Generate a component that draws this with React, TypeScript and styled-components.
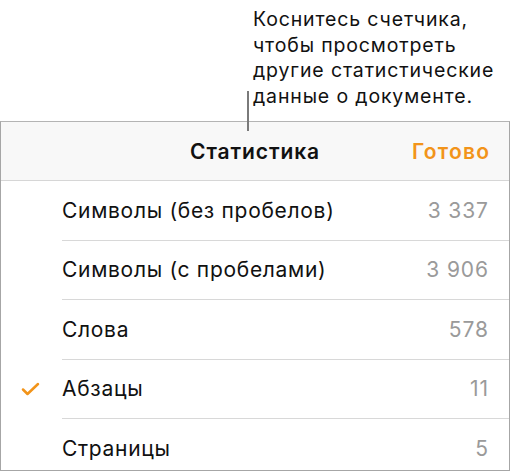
import React from 'react'
import styled, { createGlobalStyle } from 'styled-components'

const GlobalStyle = createGlobalStyle`
  html, body {
    margin: 0;
    padding: 0;
    background: #fff;
  }
  body {
    font-family: Inter, Roboto, "Liberation Sans", sans-serif;
    color: #111;
  }
`

const Page = styled.div`
  position: relative;
  width: 512px;
  height: 474px;
  overflow: hidden;
`

const Callout = styled.div`
  padding: 7px 0 0 253px;
  height: 121px;
  box-sizing: border-box;
  font-size: 19.5px;
  line-height: 25.5px;
  letter-spacing: 0.85px;
  color: #111;
`

const Leader = styled.div`
  position: absolute;
  left: 247px;
  top: 91px;
  width: 1.5px;
  height: 40px;
  background: #7a7a7a;
  z-index: 2;
`

const Panel = styled.div`
  width: 510px;
  height: 350px;
  box-sizing: border-box;
  border: 1px solid #a6a6a6;
  border-top-color: #b4b4b4;
  background: #fff;
  display: flex;
  flex-direction: column;
  overflow: hidden;
`

const Header = styled.div`
  position: relative;
  flex-shrink: 0;
  height: 58px;
  background: #f8f8f8;
  border-bottom: 1px solid #d6d6d6;
  display: flex;
  align-items: center;
  justify-content: center;
`

const Title = styled.div`
  font-size: 21px;
  font-weight: 600;
  letter-spacing: 0.9px;
  color: #111;
`

const Done = styled.div`
  position: absolute;
  right: 20px;
  top: 50%;
  transform: translateY(-50%);
  font-size: 21px;
  font-weight: 600;
  letter-spacing: 1.2px;
  margin-right: -1.2px;
  color: #f2941a;
`

const List = styled.div`
  display: flex;
  flex-direction: column;
  flex-shrink: 0;
`

const Row = styled.div`
  display: flex;
  align-items: stretch;
  flex-shrink: 0;
  height: 59.5px;
`

const Mark = styled.div`
  width: 61px;
  display: flex;
  align-items: center;
  justify-content: center;
  padding-right: 2px;
  box-sizing: border-box;
`

const RowBody = styled.div<{ $last?: boolean }>`
  flex: 1;
  display: flex;
  align-items: center;
  justify-content: space-between;
  padding-right: 21px;
  border-bottom: ${p => (p.$last ? 'none' : '1px solid #d8d8d8')};
`

const Label = styled.span`
  font-size: 21px;
  letter-spacing: 0.7px;
  color: #111;
`

const Value = styled.span`
  font-size: 21px;
  letter-spacing: 0.9px;
  margin-right: -0.9px;
  color: #9a9a9a;
`

const rows = [
  { label: 'Символы (без пробелов)', value: '3 337' },
  { label: 'Символы (с пробелами)', value: '3 906' },
  { label: 'Слова', value: '578' },
  { label: 'Абзацы', value: '11', checked: true },
  { label: 'Страницы', value: '5' },
]

function Check() {
  return (
    <svg width="19" height="14" viewBox="0 0 19 14">
      <path d="M2 7.5 L6.5 12 L17 2" fill="none" stroke="#f2941a" strokeWidth="2.5" strokeLinecap="round" strokeLinejoin="round" />
    </svg>
  )
}

export default function App() {
  return (
    <Page>
      <GlobalStyle />
      <Callout>
        Коснитесь счетчика,<br />
        чтобы просмотреть<br />
        другие статистические<br />
        данные о документе.
      </Callout>
      <Leader />
      <Panel>
        <Header>
          <Title>Статистика</Title>
          <Done>Готово</Done>
        </Header>
        <List>
          {rows.map((r, i) => (
            <Row key={r.label}>
              <Mark>{r.checked && <Check />}</Mark>
              <RowBody $last={i === rows.length - 1}>
                <Label>{r.label}</Label>
                <Value>{r.value}</Value>
              </RowBody>
            </Row>
          ))}
        </List>
      </Panel>
    </Page>
  )
}
